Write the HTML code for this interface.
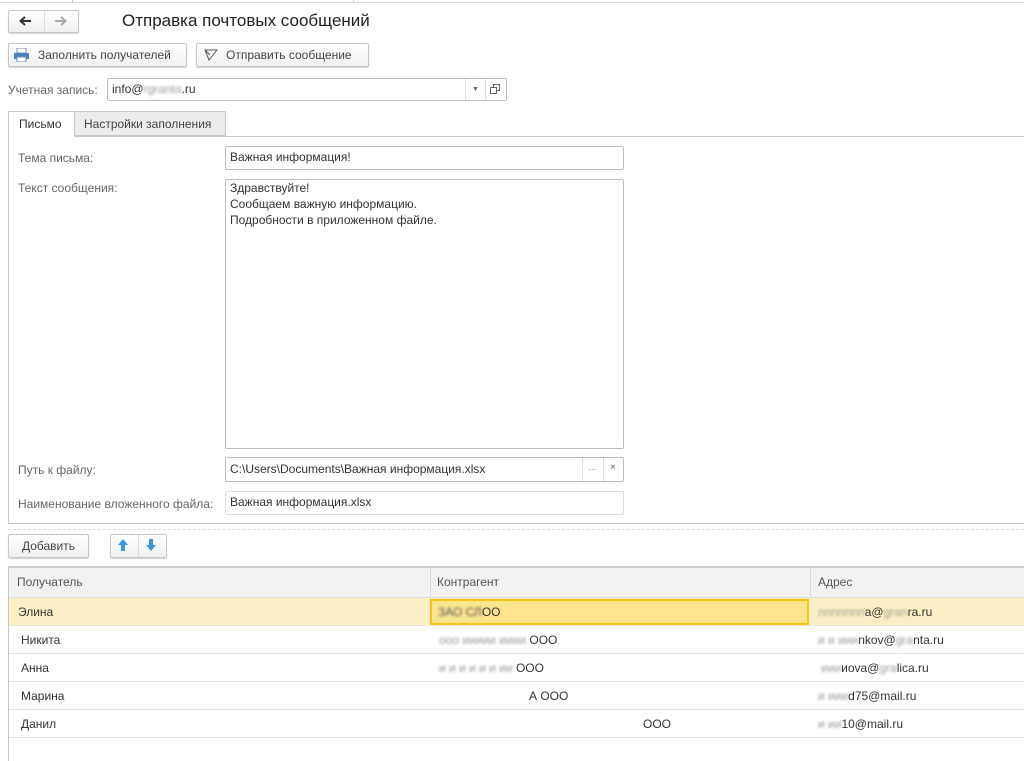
<!DOCTYPE html>
<html><head><meta charset="utf-8"><style>
*{box-sizing:border-box;margin:0;padding:0}
body{width:1024px;height:761px;background:#fff;font-family:"Liberation Sans",Arial,sans-serif;font-size:12px;color:#333;position:relative;overflow:hidden}
.a{position:absolute}
.btn{position:absolute;border:1px solid #c8c8c8;border-radius:2px;background:linear-gradient(#fff,#f0f0f0);box-shadow:0 1px 1px rgba(0,0,0,.18);color:#444;font-size:12px;line-height:22px}
.fld{position:absolute;border:1px solid #bdbdbd;border-radius:2px;background:#fff;padding-left:4px;line-height:21px;color:#333}
.lbl{position:absolute;color:#666}
.row{position:absolute;left:9px;right:0;height:28px;border-bottom:1px solid #e4e4e4;line-height:29px}
.c{position:absolute;top:0}
.blur{color:#999;filter:blur(1.2px)}
</style></head><body>
<div class="a" style="left:0;top:0;width:1024px;height:3px;border-bottom:1px solid #ddd"></div>
<div class="a" style="left:72px;top:0;width:1px;height:3px;background:#ccc"></div>
<div class="a" style="left:353px;top:0;width:1px;height:3px;background:#ccc"></div>

<div class="btn" style="left:8px;top:10px;width:71px;height:23px"></div>
<div class="a" style="left:44px;top:11px;width:1px;height:21px;background:#ddd"></div>
<svg class="a" style="left:18px;top:15px" width="14" height="12"><path d="M13 6H3M7 2L2.5 6L7 10" stroke="#333" stroke-width="2" fill="none"/></svg>
<svg class="a" style="left:54px;top:15px" width="14" height="12"><path d="M1 6H11M7 2L11.5 6L7 10" stroke="#aaa" stroke-width="2" fill="none"/></svg>
<div class="a" style="left:122px;top:11px;font-size:17px;color:#222">Отправка почтовых сообщений</div>

<div class="btn" style="left:8px;top:43px;width:179px;height:24px;padding-left:29px">Заполнить получателей</div>
<svg class="a" style="left:14px;top:48px" width="16" height="14"><rect x="3" y="0" width="9" height="5" fill="#fff" stroke="#6b8db5"/><rect x="0" y="5" width="15" height="6" fill="#4d7fc0"/><rect x="3" y="9" width="9" height="5" fill="#fff" stroke="#6b8db5"/></svg>
<div class="btn" style="left:196px;top:43px;width:173px;height:24px;padding-left:29px">Отправить сообщение</div>
<svg class="a" style="left:204px;top:49px" width="14" height="12"><path d="M1 1L13 1L5 11Z M1 1L6 6" stroke="#555" fill="none"/></svg>

<div class="lbl" style="left:8px;top:83px">Учетная запись:</div>
<div class="fld" style="left:107px;top:78px;width:400px;height:23px">info@<span class="blur">rgranta</span>.ru</div>
<div class="a" style="left:465px;top:79px;width:1px;height:21px;background:#ddd"></div>
<div class="a" style="left:485px;top:79px;width:1px;height:21px;background:#ddd"></div>
<div class="a" style="left:472px;top:86px;font-size:7px;color:#666">▼</div>
<svg class="a" style="left:490px;top:84px" width="10" height="10"><rect x="3.5" y="0.5" width="6" height="6" fill="none" stroke="#666"/><rect x="0.5" y="3.5" width="6" height="6" fill="#fff" stroke="#666"/></svg>

<div class="a" style="left:8px;top:136px;width:1020px;height:388px;border:1px solid #c8c8c8"></div>
<div class="a" style="left:8px;top:111px;width:67px;height:26px;border:1px solid #c8c8c8;border-bottom:none;background:#fff;line-height:25px;padding-left:10px;color:#333">Письмо</div>
<div class="a" style="left:74px;top:111px;width:152px;height:25px;border:1px solid #c8c8c8;background:#ececec;line-height:25px;padding-left:9px;color:#444">Настройки заполнения</div>

<div class="lbl" style="left:18px;top:151px">Тема письма:</div>
<div class="fld" style="left:225px;top:146px;width:399px;height:24px">Важная информация!</div>
<div class="lbl" style="left:18px;top:181px">Текст сообщения:</div>
<div class="fld" style="left:225px;top:179px;width:399px;height:270px;line-height:16px;padding-top:0px">Здравствуйте!<br>Сообщаем важную информацию.<br>Подробности в приложенном файле.</div>
<div class="lbl" style="left:18px;top:463px">Путь к файлу:</div>
<div class="fld" style="left:225px;top:457px;width:399px;height:25px;line-height:23px">C:\Users\Documents\Важная информация.xlsx</div>
<div class="a" style="left:582px;top:458px;width:1px;height:23px;background:#ddd"></div>
<div class="a" style="left:603px;top:458px;width:1px;height:23px;background:#ddd"></div>
<div class="a" style="left:588px;top:462px;color:#888;font-size:10px">...</div>
<div class="a" style="left:610px;top:462px;color:#666;font-size:10px">×</div>
<div class="lbl" style="left:18px;top:497px">Наименование вложенного файла:</div>
<div class="fld" style="left:225px;top:491px;width:399px;height:24px;border-color:#ddd">Важная информация.xlsx</div>

<div class="a" style="left:8px;top:529px;width:1016px;border-top:1px dashed #ddd"></div>

<div class="btn" style="left:8px;top:534px;width:81px;height:24px;text-align:center">Добавить</div>
<div class="btn" style="left:110px;top:534px;width:57px;height:24px"></div>
<div class="a" style="left:138px;top:535px;width:1px;height:22px;background:#ddd"></div>
<svg class="a" style="left:117px;top:538px" width="12" height="14"><path d="M6 1L11 7H8V13H4V7H1Z" fill="#3d95dd"/></svg>
<svg class="a" style="left:145px;top:538px" width="12" height="14"><path d="M6 13L11 7H8V1H4V7H1Z" fill="#3d95dd"/></svg>

<div class="a" style="left:8px;top:566px;width:1016px;height:195px;border-left:1px solid #c8c8c8;border-top:2px solid #ccc"></div>
<div class="a" style="left:9px;top:568px;width:1015px;height:30px;background:#f2f2f2;border-bottom:1px solid #ddd;line-height:29px;color:#555">
<span class="c" style="left:8px">Получатель</span><span class="c" style="left:428px">Контрагент</span><span class="c" style="left:809px">Адрес</span></div>
<div class="a" style="left:430px;top:568px;width:1px;height:30px;background:#ddd"></div>
<div class="a" style="left:810px;top:568px;width:1px;height:30px;background:#ddd"></div>

<div class="row" style="top:598px;background:#fbf0c5"><span class="c" style="left:9px">Элина</span>
<div class="c" style="left:421px;top:1px;width:379px;height:26px;background:#fce48f;border:2px solid #f5c518;line-height:23px;padding-left:6px"><span class="blur" style="color:#555">ЗАО СЛ</span>ОО</div>
<span class="c" style="left:809px"><span class="blur">nnnnnnn</span>a@<span class="blur">gran</span>ra.ru</span></div>
<div class="row" style="top:626px"><span class="c" style="left:12px">Никита</span><span class="c" style="left:430px"><span class="blur">ооо иииии ииии</span> ООО</span><span class="c" style="left:809px"><span class="blur">и и иии</span>nkov@<span class="blur">gra</span>nta.ru</span></div>
<div class="row" style="top:654px"><span class="c" style="left:12px">Анна</span><span class="c" style="left:430px"><span class="blur">и и и и и и ии</span> ООО</span><span class="c" style="left:812px"><span class="blur">иии</span>иova@<span class="blur">gra</span>lica.ru</span></div>
<div class="row" style="top:682px"><span class="c" style="left:12px">Марина</span><span class="c" style="left:520px">А ООО</span><span class="c" style="left:809px"><span class="blur">и иии</span>d75@mail.ru</span></div>
<div class="row" style="top:710px"><span class="c" style="left:12px">Данил</span><span class="c" style="left:634px">ООО</span><span class="c" style="left:809px"><span class="blur">и ии</span>10@mail.ru</span></div>
</body></html>
